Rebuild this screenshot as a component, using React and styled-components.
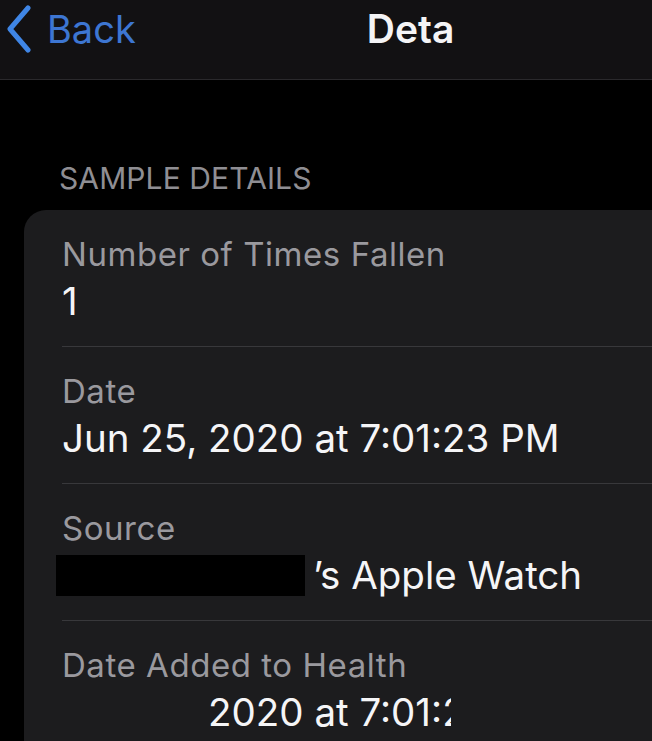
import React from 'react';
import styled, { createGlobalStyle } from 'styled-components';

const GlobalStyle = createGlobalStyle`
	html, body {
		margin: 0;
		padding: 0;
		background: #000;
		overflow: hidden;
	}
	body {
		font-family: Inter, 'Noto Sans', 'Liberation Sans', sans-serif;
		-webkit-font-smoothing: antialiased;
	}
`;

const Page = styled.div`
	width: 652px;
	height: 741px;
	overflow: hidden;
	background: #000;
`;

const NavBar = styled.header`
	height: 80px;
	background-color: #121113;
	border-bottom: 1px solid #2a292c;
	display: flex;
	align-items: flex-start;
	padding: 5px 0 0 7px;
	box-sizing: border-box;
`;

const BackButton = styled.button`
	display: flex;
	align-items: center;
	gap: 16px;
	background: none;
	border: none;
	padding: 0;
	height: 48px;
	color: #3d76d2;
	font-family: inherit;
	font-size: 38px;
	letter-spacing: 0;
`;

const NavTitle = styled.h1`
	margin: 0 0 0 231px;
	height: 48px;
	line-height: 48px;
	color: #f4f4f6;
	font-size: 39px;
	font-weight: 600;
	letter-spacing: 0;
`;

const Content = styled.main`
	padding: 0 0 0 24px;
`;

const SectionHeader = styled.h2`
	margin: 0;
	padding: 80px 0 14px 35px;
	color: #8f8e93;
	font-size: 30px;
	font-weight: 400;
	line-height: 36px;
	letter-spacing: 0.1px;
`;

const Card = styled.section`
	background-color: #1c1c1e;
	border-radius: 22px 0 0 0;
	margin-right: -40px;
	padding-left: 38px;
	height: 600px;
`;

const Row = styled.div`
	padding: 24px 0 22px;
	border-bottom: ${(p) => (p.$last ? 'none' : '1px solid #38383b')};
	display: flex;
	flex-direction: column;
	gap: 4px;
`;

const Label = styled.span`
	color: #9a999e;
	font-size: 33px;
	line-height: 40px;
	letter-spacing: 0.55px;
	white-space: nowrap;
`;

const Value = styled.span`
	display: flex;
	align-items: center;
	color: #f5f5f7;
	font-size: 38.5px;
	line-height: 46px;
	letter-spacing: 0;
	white-space: nowrap;
`;

const Redaction = styled.span`
	display: inline-block;
	width: 249px;
	height: 41px;
	margin-left: -6px;
	margin-right: 8px;
	background: #000;
`;

const Erased = styled.span`
	visibility: hidden;
`;

const Clipped = styled.span`
	display: inline-block;
	width: ${(p) => p.$width}px;
	overflow: hidden;
	vertical-align: bottom;
`;

const Chevron = () => (
	<svg width="24" height="48" viewBox="0 0 24 48" fill="none">
		<path
			d="M21 3 L3 24 L21 45"
			stroke="#3f86e6"
			strokeWidth="5"
			strokeLinecap="round"
			strokeLinejoin="round"
		/>
	</svg>
);

const App = () => {
	return (
		<Page>
			<GlobalStyle />
			<NavBar>
				<BackButton>
					<Chevron />
					Back
				</BackButton>
				<NavTitle>Deta</NavTitle>
			</NavBar>
			<Content>
				<SectionHeader>SAMPLE DETAILS</SectionHeader>
				<Card>
					<Row>
						<Label>Number of Times Fallen</Label>
						<Value>1</Value>
					</Row>
					<Row>
						<Label>Date</Label>
						<Value>Jun 25, 2020 at 7:01:23 PM</Value>
					</Row>
					<Row>
						<Label>Source</Label>
						<Value>
							<Redaction />
							’s Apple Watch
						</Value>
					</Row>
					<Row $last>
						<Label>Date Added to Health</Label>
						<Value>
							<Erased>Jun 25,&nbsp;</Erased>
							2020 at 7:01:
							<Clipped $width={9}>2</Clipped>
						</Value>
					</Row>
				</Card>
			</Content>
		</Page>
	);
};

export default App;
